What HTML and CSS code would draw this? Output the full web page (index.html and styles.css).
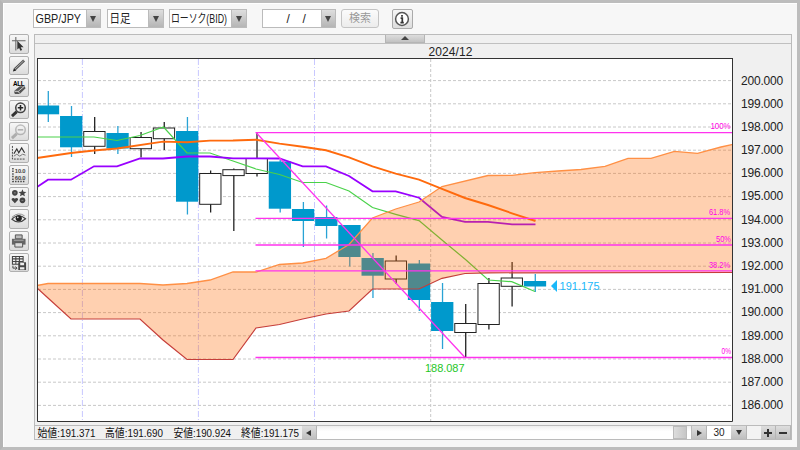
FILE: index.html
```html
<!DOCTYPE html>
<html lang="ja">
  <head>
    <meta charset="UTF-8" />
    <title>GBP/JPY 日足</title>
    <link rel="stylesheet" href="styles.css">
  </head>
  <body>
    <div class="window">
      <div class="toolbar">
        <div class="select pair"><span><svg width="50" height="16"><text x="1.500" y="12.500" textLength="45.500" lengthAdjust="spacingAndGlyphs">GBP/JPY</text></svg></span><i></i></div>
        <div class="select period"><span><svg width="24" height="16"><text x="1.500" y="13" textLength="21" lengthAdjust="spacingAndGlyphs">日足</text></svg></span><i></i></div>
        <div class="select style"><span><svg width="60" height="16"><text x="1" y="12.500" textLength="56" lengthAdjust="spacingAndGlyphs">ローソク(BID)</text></svg></span><i></i></div>
        <div class="select date"><span><svg width="50" height="16"><text x="23.500" y="13">/</text><text x="39.500" y="13">/</text></svg></span><i></i></div>
        <button class="search">検索</button>
        <button class="info">
          <svg width="16" height="16" viewBox="0 0 16 16"><circle cx="8" cy="8" r="6.400" fill="#fff" stroke="#555" stroke-width="1.500"/><path d="M8 4v1.800M6.600 7.200H8.300V11.600M6.400 11.600h3.400" fill="none" stroke="#333" stroke-width="1.700"/></svg>
        </button>
      </div>

      <div class="main">
        <div class="tools">
          <button><svg viewBox="0 0 18 18"><path d="M2 6h14M6 2v14" stroke="#666" stroke-width="1.100"/><path d="M7.500 6l6.500 6.500h-3l1.500 3-1.800.8-1.300-3-1.900 1.700z" fill="#333"/></svg></button>
          <button><svg viewBox="0 0 18 18"><path d="M5 12.500L14.500 3.500" stroke="#555" stroke-width="2.800"/><path d="M5.300 12.200L14 4" stroke="#bbb" stroke-width=".9"/><path d="M3 15l1-3.500 2.500 2.500z" fill="#222"/></svg></button>
          <button><svg viewBox="0 0 18 18"><text x="3" y="6.800" class="all" textLength="12">ALL</text><path d="M4 12.500l6-5h5l1 2-6 6H5z" fill="#555"/><path d="M4.500 12.700h4l1.500 2.300M8.500 12.700l6-5" fill="none" stroke="#ddd" stroke-width=".9"/></svg></button>
          <button><svg viewBox="0 0 18 18"><path d="M2 15.500l5-4.500" stroke="#333" stroke-width="3"/><circle cx="10.800" cy="7" r="4.900" fill="#eee" stroke="#444" stroke-width="1.600"/><path d="M8 7h5.600M10.800 4.200v5.600" stroke="#222" stroke-width="1.600"/></svg></button>
          <button class="off"><svg viewBox="0 0 18 18"><path d="M2 15.500l5-4.500" stroke="#333" stroke-width="3"/><circle cx="10.800" cy="7" r="4.900" fill="#eee" stroke="#444" stroke-width="1.600"/><path d="M8 7h5.600" stroke="#222" stroke-width="1.600"/></svg></button>
          <button><svg viewBox="0 0 18 18"><path d="M2.500 2v13.500H16" fill="none" stroke="#444" stroke-dasharray="2 1"/><path d="M4 10l3-5 2 4 3-5 3 5" fill="none" stroke="#333" stroke-width="1.200"/><path d="M4 12.500l3-2 3 2 3-2 3 1" fill="none" stroke="#777"/></svg></button>
          <button><svg viewBox="0 0 18 18"><path d="M3 2v14h13" fill="none" stroke="#444" stroke-width="1.500" stroke-dasharray="1.500 1.200"/><text x="5" y="7.500" class="num" textLength="11">10.0</text><text x="5" y="14" class="num" textLength="11">60.0</text></svg></button>
          <button><svg viewBox="0 0 18 18" fill="#444"><circle cx="5" cy="5" r="2.900"/><path d="M12.800 1.200l1.100 2.600 2.900.2-2.200 1.800.8 2.800-2.600-1.500-2.600 1.500.8-2.800-2.200-1.800 2.900-.2z"/><path d="M5 15.700l-3.200-3.400c-.8-1.800 1.900-3.100 3.200-1.200 1.300-1.900 4-.6 3.200 1.200z"/><circle cx="12.800" cy="12.700" r="2.900"/><path d="M4 5h2M11.800 12.700h2" stroke="#999" stroke-width=".8"/></svg></button>
          <button><svg viewBox="0 0 18 18"><path d="M2 9.500Q8.500 2.500 16 9Q9 15.500 2 9.500z" fill="#eee" stroke="#444" stroke-width="1.100"/><circle cx="9" cy="8.600" r="3.200" fill="#222"/><circle cx="8" cy="7.600" r=".8" fill="#ddd"/><path d="M2 7.500Q8.500 1.500 15 6" fill="none" stroke="#777" stroke-width=".8"/></svg></button>
          <button><svg viewBox="0 0 18 18"><path d="M5.500 3h7v4h-7z" fill="#bbb" stroke="#555"/><path d="M2 7h14v6H2z" fill="#666"/><path d="M4 8.500h10" stroke="#aaa"/><path d="M5 11h8v4.500H5z" fill="#ddd" stroke="#555"/></svg></button>
          <button><svg viewBox="0 0 18 18"><path d="M2.500 2.500h11v8h-11zM2.500 5h11M2.500 7.700h11M6 2.500v8M9.700 2.500v8" fill="none" stroke="#444" stroke-width="1.100"/><path d="M8.500 8.500h8v8h-8z" fill="#444"/><path d="M10.500 9h4v2.500h-4zM10.300 13.500h4.500v2.500h-4.500z" fill="#eee"/><path d="M3 12v2.500h4M5.500 12.800l1.700 1.700-1.700 1.700" fill="none" stroke="#444"/></svg></button>
        </div>

        <div class="panel">
          <div class="splitter"><b></b></div>
          <div class="month">2024/12</div>
          <div class="chart-row">
            <svg class="chart" viewBox="37 58 696 364" width="696" height="364">
              <rect x="37" y="58" width="696" height="364" fill="#fff"/>
              <g id="grid"></g>
              <g id="candles"></g>
              <polyline class="span-c" points="37,137 94,137 117,140.500 140,135.500 163.500,127 187,153 210,153 233,161 256,169 279.500,174.500 302.700,182.500 326,182.500 349,191 372.500,207.500 395.700,214.300 419,220.600 442,240 465.500,259.500 488.300,280 511.700,281.700 535,291.500"/>
              <polyline class="base" points="37,187 48,179.700 71,179.700 94,166.300 117,166.300 140,158.500 163,158.500 187,156.500 210,156.500 233,158.300 279.500,158.500 302.700,166.300 326,166.300 349,176 372.500,191.300 395.700,191.300 419,197.700 442,217 465,221.800 488,221.800 512,224.300 535.500,224.300"/>
              <polygon class="cloud" points="37,285.500 48,283.500 140,283.500 163,285 187,283.500 210,280 233,272 256,272 279.500,264.500 302.700,263 326,258.300 349,244.500 372.500,218 395.700,209 419,202 442,186.500 488,175.500 512,175.300 535,172.700 558,171 581,169.500 605,166.300 628,158.300 651,158.300 674.500,151.300 697.500,153.300 721,147 733,144.300 733,272.500 488,272.800 465,273.500 442,278.300 419,289 372.500,289 349,311 326,314 302.700,319 279.500,324.500 256,328 233,359.500 187,359.500 163,340 140,319 71,319 48,298 37,288"/>
              <polyline class="span-a" points="37,285.500 48,283.500 140,283.500 163,285 187,283.500 210,280 233,272 256,272 279.500,264.500 302.700,263 326,258.300 349,244.500 372.500,218 395.700,209 419,202 442,186.500 488,175.500 512,175.300 535,172.700 558,171 581,169.500 605,166.300 628,158.300 651,158.300 674.500,151.300 697.500,153.300 721,147 733,144.300"/>
              <polyline class="span-b" points="37,288 48,298 71,319 140,319 163,340 187,359.500 233,359.500 256,328 279.500,324.500 302.700,319 326,314 349,311 372.500,289 419,289 442,278.300 465,273.500 488,272.800 733,272.500"/>
              <polyline class="turn" points="37,158 71,153 94,150.500 117,148.500 163,141.600 187,142.200 210,140.600 233,140.500 256,139.700 279.500,143.600 302.700,146.700 326,150.300 349,157.300 372.500,166.300 395.700,173.700 419,179.700 442,188.800 465,198 488,205 512,213.300 535.500,221"/>
              <g id="fib"></g>
              <path class="fib" d="M256.500 133L465 357.500"/>
              <path d="M551 286l6-6v12z" fill="#1ab8fa"/>
              <text class="last" x="559.500" y="290.200" textLength="40">191.175</text>
              <text class="low" x="425" y="371.500" textLength="39.500">188.087</text>
              <path d="M37.500 58v363.500h695V58" fill="none" stroke="#333"/>
              <path d="M37 58.500h696" stroke="#333"/>
            </svg>
            <div class="axis" id="axis"></div>
          </div>
          <div class="status">
            <svg class="ohlc" width="267" height="14">
              <text x="2.500" y="11" textLength="58">始値:191.371</text>
              <text x="70" y="11" textLength="58">高値:191.690</text>
              <text x="138.500" y="11" textLength="57.500">安値:190.924</text>
              <text x="206" y="11" textLength="58">終値:191.175</text>
            </svg>
            <div class="btn left"></div>
            <div class="track"><b></b></div>
            <div class="btn right"></div>
            <div class="count">30</div>
            <div class="btn drop"></div>
            <div class="blank"></div>
            <div class="btn plus"></div>
            <div class="btn minus"></div>
          </div>
        </div>
      </div>
    </div>

    <script>
      // [up, high, top, bottom, low]
      const candles = [
        [0, 91, 105.5, 114.3, 122],
        [0, 106, 116, 147.3, 157],
        [1, 117, 131.5, 146.3, 154],
        [0, 126, 133, 148.5, 154],
        [1, 132, 137.5, 148.7, 157.5],
        [1, 122, 128, 138.7, 150],
        [0, 117, 131, 201.7, 214.5],
        [1, 170.5, 173.5, 204.3, 212.5],
        [1, 168.5, 169.7, 175.6, 231],
        [1, 133, 158.5, 173.5, 176.5],
        [0, 160, 161.5, 208.7, 212.5],
        [0, 202, 209, 221, 247],
        [0, 205.5, 217, 226, 238.5],
        [0, 225, 225, 257, 266.5],
        [0, 253, 258, 275.7, 298],
        [1, 255.5, 261, 279, 284],
        [0, 260, 263.5, 300, 311],
        [0, 283, 302, 331, 349],
        [1, 304, 323.5, 332.5, 357],
        [1, 278, 283.5, 324.5, 329.5],
        [1, 262, 278, 286.3, 306.5],
        [0, 274, 281, 286.5, 292],
      ];
      const levels = [
        ["100%", 132.6, 710.5, 20],
        ["61.8%", 218.3, 709, 21],
        ["50%", 245, 716, 15],
        ["38.2%", 270.8, 709, 21],
        ["0%", 357.5, 721.5, 9.5],
      ];

      let grid = "";
      let axis = "";
      for (let i = 0; i < 15; i++) {
        const y = 80.6 + i * 23.2;
        grid += `<path class="h" d="M38 ${y}H732"/>`;
        axis += `<div>${200 - i}.000</div>`;
      }
      [82.4, 198.4, 314.5].forEach((x) => {
        grid += `<path class="week" d="M${x} 59V421"/>`;
      });
      grid += `<path class="h" d="M430.700 59V421"/>`;
      document.getElementById("grid").innerHTML = grid;
      document.getElementById("axis").innerHTML = axis;

      document.getElementById("candles").innerHTML = candles
        .map(([up, high, top, bottom, low], i) => {
          const x = 48 + i * 23.19;
          const w = up ? 21.3 : 22.3;
          return `<g class="${up ? "up" : "down"}"><path d="M${x + 0.3} ${high}V${low}"/>
            <rect x="${x - w / 2}" y="${top}" width="${w}" height="${bottom - top}"/></g>`;
        })
        .join("");

      document.getElementById("fib").innerHTML = levels
        .map(
          ([label, y, x, w]) =>
            `<path class="fib" d="M255.500 ${y}H732"/><text class="fib-label" x="${x}" y="${y - 3.2}" textLength="${w}" lengthAdjust="spacingAndGlyphs">${label}</text>`
        )
        .join("");

      document.querySelectorAll(".ohlc text").forEach((t) => {
        t.setAttribute("lengthAdjust", "spacingAndGlyphs");
      });
    </script>
  </body>
</html>
```
FILE: styles.css
```css
* {
  box-sizing: border-box;
}
body {
  margin: 0;
  width: 800px;
  height: 450px;
  overflow: hidden;
  background: #bbb;
  font-family: "Liberation Sans", "Noto Sans CJK JP", sans-serif;
  font-size: 12px;
  color: #222;
}
svg {
  display: block;
}
button {
  padding: 0;
  margin: 0;
  font-family: inherit;
}
.window {
  width: 800px;
  height: 450px;
  border: 3px solid #bdbdbd;
  border-left-color: #b5b5b5;
  background: #f7f7f7;
  box-shadow: inset 1px 1px 0 #fff;
}

/* toolbar */
.toolbar {
  height: 30.500px;
  padding: 6px 0 0 30px;
  display: flex;
  align-items: flex-start;
}
.select {
  display: flex;
  height: 19px;
  border: 1px solid #bbb;
  background: #fff;
}
.select span {
  flex: 1;
  overflow: hidden;
}
.select text {
  font-size: 12px;
  fill: #222;
}
.select i {
  flex: none;
  width: 14.500px;
  background: linear-gradient(#dedede, #b5b5b5);
  border-left: 1px solid #bbb;
  display: flex;
  align-items: center;
  justify-content: center;
}
.select i::after {
  content: "";
  border: 3.500px solid transparent;
  border-top: 6px solid #444;
  border-bottom: 0;
}
.pair {
  width: 68px;
  margin-right: 5.500px;
}
.period {
  width: 57px;
  margin-right: 5px;
}
.style {
  width: 78px;
  margin-right: 15.500px;
}
.date {
  width: 74px;
  margin-right: 5px;
}
.search {
  width: 38px;
  height: 19px;
  border: 1px solid #c4c4c4;
  border-radius: 3px;
  background: linear-gradient(#fbfbfb, #ececec);
  color: #999;
  font-size: 11px;
  line-height: 17px;
  margin-right: 13px;
}
.info {
  width: 20.500px;
  height: 20px;
  border: 1px solid #aaa;
  border-radius: 2px;
  background: linear-gradient(#f6f6f6, #ddd);
  display: flex;
  align-items: center;
  justify-content: center;
}

/* drawing tools */
.main {
  display: flex;
  padding-left: 6px;
}
.tools {
  display: flex;
  flex-direction: column;
  gap: 2.400px;
  width: 24.500px;
  padding-top: .5px;
}
.tools button {
  width: 19.500px;
  height: 19.500px;
  border: 1px solid #b0b0b0;
  border-radius: 2px;
  background: linear-gradient(#f7f7f7, #dcdcdc);
}
.tools svg {
  width: 17.500px;
  height: 17.500px;
}
.tools .off svg {
  opacity: .3;
}
.all {
  font-size: 6.500px;
  font-weight: bold;
}
.num {
  font-size: 6px;
  font-weight: bold;
  fill: #444;
}

/* chart panel */
.panel {
  width: 758.500px;
  height: 406.500px;
  border: 1px solid #bbb;
  background: #f0f0f0;
}
.splitter {
  height: 9px;
  border-bottom: 1px solid #c0c0c0;
  display: flex;
}
.splitter b {
  width: 40px;
  margin-left: 350px;
  background: linear-gradient(#ddd, #c2c2c2);
  border: 1px solid #b5b5b5;
  border-top: 0;
  display: flex;
  align-items: center;
  justify-content: center;
}
.splitter b::after {
  content: "";
  border: 4px solid transparent;
  border-bottom: 4px solid #444;
  border-top: 0;
}
.month {
  height: 14.500px;
  line-height: 17px;
  padding-left: 394px;
  letter-spacing: .1px;
}
.chart-row {
  display: flex;
  padding-left: 2.500px;
  height: 367px;
}
.chart {
  flex: none;
}
.axis {
  flex: 1;
  padding: 11.500px 0 0 8px;
  letter-spacing: -.2px;
}
.axis div {
  height: 23.200px;
  line-height: 23.200px;
}
.h {
  stroke: #c8c8c8;
  stroke-dasharray: 3 2;
}
.week {
  stroke: #c8c8ff;
  stroke-dasharray: 6 2 1 2;
}
.up {
  stroke: #222;
  fill: #fff;
}
.up path {
  stroke-width: 1.300;
}
.down path {
  stroke: #29a3d5;
  stroke-width: 1.300;
}
.down rect {
  fill: #0099cc;
}
.chart polyline {
  fill: none;
}
.span-c {
  stroke: #4ad24a;
  stroke-width: 1.200;
}
.base {
  stroke: #9900ff;
  stroke-width: 1.800;
}
.turn {
  stroke: #ff6a0d;
  stroke-width: 1.900;
}
.cloud {
  fill: #ff6600;
  fill-opacity: .31;
}
.span-a {
  stroke: #ff9045;
  stroke-width: 1.300;
}
.span-b {
  stroke: #c63e3a;
  stroke-width: 1.200;
}
.fib {
  stroke: #ff33ee;
  stroke-width: 1.300;
}
.fib-label {
  font-size: 8.500px;
  fill: #ff00e6;
}
.last {
  font-size: 11px;
  fill: #1ab8fa;
}
.low {
  font-size: 11px;
  fill: #1fc71f;
}

/* status bar */
.status {
  display: flex;
  height: 14px;
  border-top: 1px solid #bbb;
}
.ohlc {
  flex: none;
  font-size: 11.500px;
  fill: #111;
}
.btn {
  flex: none;
  width: 15px;
  background: linear-gradient(#dedede, #bebebe);
  border-right: 1px solid #b5b5b5;
  display: flex;
  align-items: center;
  justify-content: center;
}
.btn::after {
  content: "";
  border: 3.500px solid transparent;
}
.left::after {
  border-right: 5px solid #333;
  border-left: 0;
}
.right::after {
  border-left: 5px solid #333;
  border-right: 0;
}
.drop {
  width: 16px;
}
.drop::after {
  border-top: 5px solid #333;
  border-bottom: 0;
}
.track {
  flex: 1;
  background: linear-gradient(#eee, #fff 40%);
  display: flex;
  justify-content: flex-end;
  border-right: 1px solid #bbb;
}
.track b {
  width: 14px;
  margin-right: 4px;
  background: linear-gradient(90deg, #ddd, #c6c6c6);
  border: 1px solid #bbb;
}
.count {
  width: 24px;
  background: #fff;
  text-align: center;
  font-size: 10px;
  line-height: 14px;
}
.blank {
  width: 14px;
  background: #f3f3f3;
}
.plus::after,
.minus::after {
  border: 0;
  width: 8px;
  height: 8px;
  background: linear-gradient(#333, #333) center / 8px 2px no-repeat;
}
.plus::after {
  background: linear-gradient(#333, #333) center / 8px 2px no-repeat, linear-gradient(#333, #333) center / 2px 8px no-repeat;
}
```
